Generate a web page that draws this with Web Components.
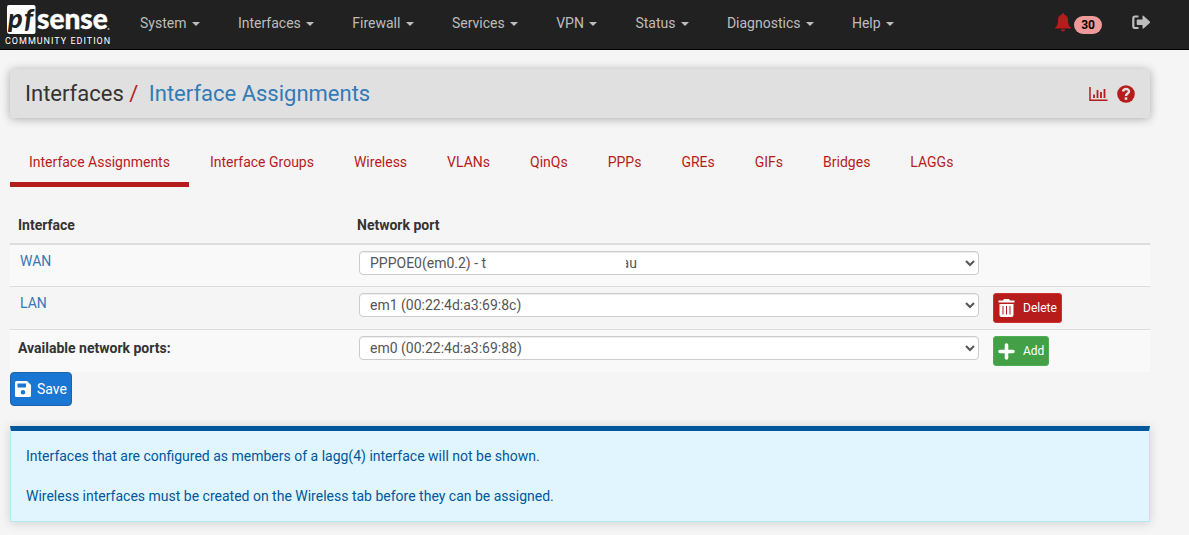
<!DOCTYPE html>
<html lang="en">
<head>
<meta charset="utf-8">
<title>Interfaces: Interface Assignments</title>
<style>
body { margin: 0; background: #f5f5f5; color: #333; font: 14px/20px Roboto, "Liberation Sans", sans-serif; }
main { padding: 19px 39px 13px 10px; }
</style>
</head>
<body>
<pf-navbar>
  <pf-menu>System</pf-menu><pf-menu>Interfaces</pf-menu><pf-menu>Firewall</pf-menu><pf-menu>Services</pf-menu><pf-menu>VPN</pf-menu><pf-menu>Status</pf-menu><pf-menu>Diagnostics</pf-menu><pf-menu>Help</pf-menu>
</pf-navbar>
<main>
  <pf-title section="Interfaces">Interface Assignments</pf-title>
  <pf-tabs>
    <pf-tab active>Interface Assignments</pf-tab><pf-tab>Interface Groups</pf-tab><pf-tab>Wireless</pf-tab><pf-tab>VLANs</pf-tab><pf-tab>QinQs</pf-tab><pf-tab>PPPs</pf-tab><pf-tab>GREs</pf-tab><pf-tab>GIFs</pf-tab><pf-tab>Bridges</pf-tab><pf-tab>LAGGs</pf-tab>
  </pf-tabs>
  <pf-assignments></pf-assignments>
  <pf-button kind="save">Save</pf-button>
  <pf-alert>
    <p>Interfaces that are configured as members of a lagg(4) interface will not be shown.</p>
    <p>Wireless interfaces must be created on the Wireless tab before they can be assigned.</p>
  </pf-alert>
</main>
<script>
function define(name, render) {
  customElements.define(name, class extends HTMLElement {
    constructor() {
      super();
      this.attachShadow({ mode: 'open' });
    }
    connectedCallback() {
      const t = document.createElement('template');
      t.innerHTML = render(this);
      this.shadowRoot.replaceChildren(t.content.cloneNode(true));
    }
  });
}

define('pf-logo', () => `
<style>
:host { display: block; width: 112px; }
a { display: block; color: #fff; text-decoration: none; }
svg { display: block; }
span { display: block; padding-left: 5px; font-size: 9px; line-height: 10px; letter-spacing: 1px; white-space: nowrap; }
</style>
<a href="#">
  <svg width="112" height="36" viewBox="0 0 112 36" role="img" aria-label="pfsense">
    <path d="M9 5H33.500Q35.500 5 35.500 7V32Q35.500 34 33.500 34H10Q7 34 7 31V7Q7 5 9 5Z" fill="#fff"/>
    <text x="8" y="28" font-family="Lato" font-size="27" font-weight="900" font-style="italic" fill="#212121">p<tspan x="24">f</tspan></text>
    <text x="37" y="29" font-family="Lato" font-size="28" font-weight="900" fill="#fff" stroke="#fff" stroke-width=".4">sense</text>
    <circle cx="108.500" cy="29" r="1" fill="#aaa"/>
  </svg>
  <span>COMMUNITY EDITION</span>
</a>`);

define('pf-menu', () => `
<style>
:host { display: block; }
a { color: #bdbdbd; text-decoration: none; white-space: nowrap; }
i { display: inline-block; margin-left: 2px; vertical-align: middle; border: 4px solid transparent; border-top-color: currentColor; border-bottom: 0; }
</style>
<a href="#"><slot></slot> <i></i></a>`);

define('pf-navbar', () => `
<style>
:host { display: block; background: #212121; border-bottom: 1px solid #000; }
nav { display: flex; height: 49px; }
.menus { display: flex; gap: 38px; padding: 13px 0 0 28px; flex: 1; }
.tools { display: flex; align-items: flex-start; gap: 30px; padding: 12px 38px 0 0; }
.tools a { display: flex; align-items: flex-start; gap: 3px; text-decoration: none; color: #bdbdbd; }
svg { display: block; }
.badge { margin-top: 4px; padding: 0 7px; border-radius: 9px; background: #ef9a9a; color: #000; font-size: 12px; font-weight: 700; line-height: 18px; }
</style>
<nav aria-label="Main">
  <pf-logo></pf-logo>
  <div class="menus"><slot></slot></div>
  <div class="tools">
    <a href="#" aria-label="Notices">
      <svg width="16" height="20" viewBox="0 0 16 20"><path fill="#b71c1c" d="M7 2.500V1.500Q8 .600 9 1.500V2.500C12 3 13 5.500 13 8 13 12.500 14 14 15.800 15.500V16.500H.200V15.500C2 14 3 12.500 3 8 3 5.500 4 3 7 2.500ZM5.800 17.500H10.200C10.200 20 5.800 20 5.800 17.500Z"/></svg>
      <span class="badge">30</span>
    </a>
    <a href="#" aria-label="Log out">
      <svg width="19" height="20" viewBox="0 0 19 20"><path d="M6.500 4.500H3Q1.300 4.500 1.300 6.500V14Q1.300 16 3 16H6.500" fill="none" stroke="#bdbdbd" stroke-width="2.200"/><path fill="#bdbdbd" d="M5.500 7.500H10.500V4Q10.500 3 11.500 3.800L17.800 9.500Q18.300 10.200 17.800 11L11.500 16.500Q10.500 17 10.500 16V13H5.500Q4.700 13 4.700 12.200V8.300Q4.700 7.500 5.500 7.500Z"/></svg>
    </a>
  </div>
</nav>`);

define('pf-title', el => `
<style>
:host { display: flex; align-items: center; justify-content: space-between; padding: 12px 15px; background: #e0e0e0; border-radius: 4px; box-shadow: 0 1px 10px rgba(0,0,0,.3); }
h1 { margin: 0; font-size: 22px; line-height: 25px; font-weight: 400; color: #333; }
h1 a { color: #337ab7; text-decoration: none; margin-left: 5px; }
i { font-style: normal; color: #b71c1c; }
.icons { display: flex; gap: 9px; }
.icons a, svg { display: block; }
</style>
<h1>${el.getAttribute('section')} <i>/</i> <a href="#"><slot></slot></a></h1>
<div class="icons">
  <a href="#" aria-label="Status"><svg width="19" height="18" viewBox="0 0 19 18"><path fill="none" stroke="#b71c1c" d="M1 2V15.200H18.500" stroke-width="1.500"/><path fill="none" stroke="#b71c1c" stroke-width="1.800" d="M5 13V9.500M8.500 13V5M12 13V7M15.500 13V4"/></svg></a>
  <a href="#" aria-label="Help"><svg width="18" height="18" viewBox="0 0 18 18"><circle cx="9" cy="9" r="8.800" fill="#b71c1c"/><path d="M6 6.500C6.500 3.300 12 3.200 12 6.500 12 8.700 9 8.500 9 11" fill="none" stroke="#e0e0e0" stroke-width="2.400"/><rect x="7.700" y="12.300" width="2.600" height="2.500" fill="#e0e0e0"/></svg></a>
</div>`);

define('pf-tab', () => `
<style>
:host { display: block; }
a { display: block; padding: 10px 19px; border-bottom: 5px solid transparent; color: #b71c1c; text-decoration: none; }
:host([active]) a { border-color: #b71c1c; }
</style>
<a href="#"><slot></slot></a>`);

define('pf-tabs', () => `
<style>:host { display: flex; gap: 2px; margin: 24px 0 20px; }</style><slot></slot>`);

const KINDS = {
  save: { bg: '#1976d2', border: '#1c62a8', svg: '<svg width="16" height="16" viewBox="0 0 16 16"><path fill="#fff" fill-rule="evenodd" d="M1.500 0H12L16 4V14.500Q16 16 14.500 16H1.500Q0 16 0 14.500V1.500Q0 0 1.500 0ZM2.500 2.500V6.500H11V2.500ZM8 9A2.300 2.300 0 1 0 8 13.600 2.300 2.300 0 1 0 8 9Z"/></svg>' },
  delete: { bg: '#b71c1c', border: '#d32f2f', svg: '<svg width="17" height="20" viewBox="0 0 17 20"><path fill="#fff" fill-rule="evenodd" d="M6 1H11L12 2.500H16.500V4.500H.500V2.500H5ZM1.500 6H15.500V17Q15.500 19 13.500 19H3.500Q1.500 19 1.500 17ZM4.500 8V16.500H5.500V8ZM8 8V16.500H9V8ZM11.500 8V16.500H12.500V8Z"/></svg>' },
  add: { bg: '#43a047', border: '#4caf50', svg: '<svg width="17" height="20" viewBox="0 0 17 20"><path fill="none" stroke="#fff" stroke-width="3.600" stroke-linecap="round" d="M8.500 4V17M2 10.500H15"/></svg>' }
};
define('pf-button', el => {
  const k = KINDS[el.getAttribute('kind')];
  return `
<style>
:host { display: block; }
button { display: flex; align-items: center; gap: 8px; height: 30px; padding: 0 4px; border: 1px solid ${k.border}; border-radius: 3px; background: ${k.bg}; color: #fff; font: 12px/18px Roboto, sans-serif; }
:host([kind="save"]) button { gap: 6px; height: 34px; border-radius: 4px; font-size: 14px; line-height: 20px; }
svg { display: block; }
</style>
<button type="button">${k.svg}<slot></slot></button>`;
});

const gap = '\u00a0'.repeat(39);
define('pf-assignments', () => `
<style>
:host { display: block; }
table { width: 100%; table-layout: fixed; border-spacing: 0; }
.name { width: 339px; }
.action { width: 167px; }
th, td { padding: 6px 4px 6px 10px; text-align: left; vertical-align: top; box-sizing: border-box; }
th { padding: 8px; }
thead th { border-bottom: 2px solid #ddd; }
tbody tr { height: 43px; }
tbody tr:first-child { height: 41px; }
tbody tr:nth-child(odd) { background: #f9f9f9; }
tbody tr + tr > * { border-top: 1px solid #ddd; }
a { color: #337ab7; text-decoration: none; }
.field { position: relative; }
select { display: block; width: 100%; height: 24px; padding: 0 6px; border: 1px solid #ccc; border-radius: 4px; background: #fff; color: #555; font: 14px/20px Roboto, sans-serif; box-shadow: inset 0 1px 1px rgba(0,0,0,.075); }
.mask { position: absolute; left: 128px; top: 3px; width: 139px; height: 18px; background: #fff; }
</style>
<table>
  <colgroup><col class="name"><col><col class="action"></colgroup>
  <thead><tr><th>Interface</th><th>Network port</th><th></th></tr></thead>
  <tbody>
    <tr><td><a href="#">WAN</a></td><td><div class="field"><select aria-label="WAN port"><option>PPPOE0(em0.2) - t${gap}au</option></select><span class="mask"></span></div></td><td></td></tr>
    <tr><td><a href="#">LAN</a></td><td><select aria-label="LAN port"><option>em1 (00:22:4d:a3:69:8c)</option></select></td><td><pf-button kind="delete">Delete</pf-button></td></tr>
    <tr><th><label for="avail">Available network ports:</label></th><td><select id="avail"><option>em0 (00:22:4d:a3:69:88)</option></select></td><td><pf-button kind="add">Add</pf-button></td></tr>
  </tbody>
</table>`);

define('pf-alert', () => `
<style>
:host { display: block; margin-top: 20px; padding: 15px; background: #e1f5fe; color: #01579b; border: 1px solid #b2ebf2; border-top: 5px solid #01579b; box-shadow: 0 1px 10px rgba(0,0,0,.15); }
::slotted(p) { margin: 0 0 20px; }
::slotted(p:last-child) { margin: 0; }
</style>
<slot></slot>`);
</script>
</body>
</html>
